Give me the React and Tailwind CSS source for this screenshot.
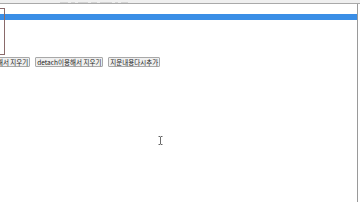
import React from "react";

const Btn = ({ children, className = "" }) => (
    <button
        className={`h-[10px] px-[1px] border border-[#a8a8a8] bg-[#f0f0f0] rounded-[1px] text-[6.5px] leading-[8px] text-[#222] whitespace-nowrap ${className}`}
    >
        {children}
    </button>
);

export default function App() {
    return (
        <div
            className="relative w-[360px] h-[202px] overflow-hidden bg-white"
            style={{ fontFamily: '"Noto Sans CJK KR", "Liberation Sans", sans-serif' }}
        >
            {/* top strip (clipped page header) */}
            <div className="h-[3px] bg-[#efefef] flex items-end gap-[3px] pl-[60px] overflow-hidden">
                {[8, 4, 10, 6, 12, 3, 7].map((w, i) => (
                    <div key={i} className="h-[1px] bg-[#d4d4d4]" style={{ width: w }} />
                ))}
            </div>
            <div className="h-[1px] bg-[#a9a9a9]" />

            <div className="flex h-[198px]">
                <div className="flex-1 flex flex-col">
                    {/* box + blue bar */}
                    <div className="relative mt-[4px] h-[47px]">
                        <div className="absolute left-0 top-0 w-[5px] h-[47px] border border-l-0 border-[#8a6a6a]" />
                        <div className="mt-[6px] h-[6px] bg-[#3a8ee6]" />
                    </div>
                    {/* buttons */}
                    <div className="flex gap-[5px] mt-[2px] -ml-[40px]">
                        <Btn>remove이용해서 지우기</Btn>
                        <Btn>detach이용해서 지우기</Btn>
                        <Btn>지운내용다시추가</Btn>
                    </div>
                </div>
                <div className="w-[1px] bg-[#9a9a9a] mr-[2px]" />
            </div>

            {/* mouse cursor (I-beam) */}
            <svg className="absolute left-[158px] top-[136px]" width="5" height="9" viewBox="0 0 5 9">
                <path d="M0.5 0.5h1.5l0.5 0.5l0.5-0.5h1.5M2.5 1v7M0.5 8.5h1.5l0.5-0.5l0.5 0.5h1.5" stroke="#444" strokeWidth="0.8" fill="none" />
            </svg>
        </div>
    );
}
